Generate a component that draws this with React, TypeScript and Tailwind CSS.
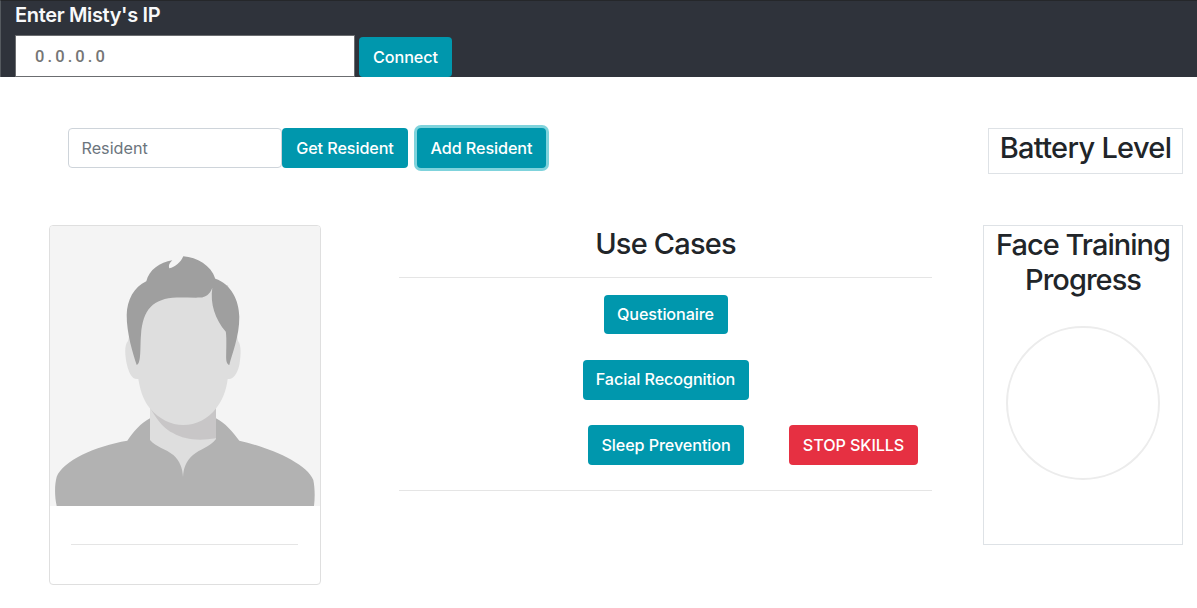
import type { ReactNode } from "react";

type ButtonProps = { className: string; children: ReactNode };

function Button({ className, children }: ButtonProps) {
  return (
    <button
      type="button"
      className={`flex shrink-0 items-center justify-center rounded-[4px] text-[16.2px] leading-6 font-[450] tracking-[-0.1px] whitespace-nowrap text-white ${className}`}
    >
      {children}
    </button>
  );
}

function Portrait() {
  return (
    <svg viewBox="50 226 270 280" className="block h-[280px] w-[270px]" aria-hidden="true">
      <rect x="50" y="226" width="270" height="280" fill="#f4f4f4" />
      {/* shirt */}
      <path
        d="M56.7 506C54.5 496 54.5 485 56.7 476.7C63 461 95 446 127.3 440.7C133 432 141 423 150 418.3H216C225 423 233 432 239.3 440.7C268 447 307 463 313.3 480C315 488 315 498 314 506Z"
        fill="#b2b2b2"
      />
      {/* neck */}
      <path
        d="M150 400H216V439C210 447 200 449 193 455C186 461 183.5 468 183 477C182.5 468 180 461 173.3 455C166 449 156 447 150 440Z"
        fill="#dedede"
      />
      <path d="M150 407.7C158 422 166 430 173 433C185 440 199 441 216 438.3V405Z" fill="#c8c6c7" />
      {/* ears and face */}
      <path
        d="M128 341C124 345 125 356 127 365C129 373 132 380 138.3 379C141 395 145 402 150 408.5C159 419 171 425 183.3 425C196 425 208 419 216 408.5C222 401 226 392 227.7 379C234 380 238 372 239.5 364C241 355 241.5 345 238 341L228 285H140Z"
        fill="#dedede"
      />
      {/* hair */}
      <path
        d="M136.7 365C133 354 126.5 333 126.7 315C127 300 134 287 146.3 281.3C149 270 160 262 172.3 260.3C169.5 263 168.3 265 169.2 268.2C175 267.5 181 262 183.3 256.3C197 257.5 211 265 215.3 278.8C231 284 239 300 239.3 316.7C239.5 336 232 354 229.3 365C226 364 226 359 226.2 353C226.5 345 226.5 336 225.8 331.7C215 319 210 304 212.3 287.7C210 294 206 297.3 200 297.6C192 297.8 184 297.3 176.7 297.5C153 298.5 143 309 141 335C140 345 141.5 364 136.7 365Z"
        fill="#9f9f9f"
      />
    </svg>
  );
}

export default function App() {
  return (
    <div className="h-[608px] w-[1197px] overflow-hidden bg-white font-['Inter','Liberation_Sans',sans-serif] text-[#212529]">
      <header className="h-[77px] border-t border-l border-t-[#25272a] border-l-[#555a5f] bg-[#2f333b] pl-[14px]">
        <h5 className="h-[34px] pt-[2px] text-[20px] leading-[25px] font-semibold tracking-[-0.35px] text-[#f8f9fa]">
          Enter Misty's IP
        </h5>
        <div className="flex">
          <input
            placeholder="0.0.0.0"
            className="h-[42px] w-[340px] border border-[#6b6d70] bg-white pt-px pl-[19px] font-['Roboto',sans-serif] text-[16.5px] font-medium tracking-[3.1px] placeholder:text-[#757575]"
          />
          <Button className="mt-0.5 ml-1 h-10 w-[93px] bg-[#0097ad]">Connect</Button>
        </div>
      </header>

      <main>
        <div className="flex items-start pt-[51px] pr-[14px] pl-[68px]">
          <input
            placeholder="Resident"
            className="h-10 w-[214px] rounded-[4px] border border-[#ced4da] bg-white px-[12.5px] text-[16.2px] placeholder:text-[#6c757d]"
          />
          <Button className="h-10 w-[126px] bg-[#0097ad]">Get Resident</Button>
          <Button className="ml-[9px] h-10 w-[129px] bg-[#0097ad] shadow-[0_0_0_3px_#7fd3dc]">
            Add Resident
          </Button>
          <h2 className="ml-auto h-[46px] w-[195px] border border-[#dee2e6] pt-px text-center text-[29px] leading-[35px] font-medium tracking-[-0.7px] whitespace-nowrap">
            Battery Level
          </h2>
        </div>

        <div className="flex items-start pt-[51px] pr-[14px] pl-[49px]">
          <section className="h-[360px] w-[272px] overflow-hidden rounded-[4px] border border-[#dfdfdf] bg-white">
            <Portrait />
            <hr className="mt-[38px] mr-[22px] ml-[21px] border-[#e5e5e5]" />
          </section>

          <section className="ml-[78px] w-[533px]">
            <h2 className="h-[52px] pt-px text-center text-[29px] leading-[35px] font-medium tracking-[-0.8px]">
              Use Cases
            </h2>
            <hr className="border-[#e5e5e5]" />
            <div className="flex flex-col items-center pt-[17px]">
              <Button className="h-[39px] w-[124px] bg-[#0097ad] pb-px">Questionaire</Button>
              <Button className="mt-[26px] h-10 w-[166px] bg-[#0097ad] pb-0.5">Facial Recognition</Button>
            </div>
            <div className="mt-[25px] mb-[25px] flex pl-[189px]">
              <Button className="h-10 w-[156px] bg-[#0097ad]">Sleep Prevention</Button>
              <Button className="ml-[45px] h-10 w-[129px] bg-[#e63042]">STOP SKILLS</Button>
            </div>
            <hr className="border-[#e5e5e5]" />
          </section>

          <section className="ml-auto flex h-[320px] w-[200px] flex-col items-center border border-[#dee2e6]">
            <h2 className="pt-px text-center text-[29px] leading-[35px] font-medium tracking-[-0.97px]">
              Face Training
              <br />
              Progress
            </h2>
            <div className="mt-[29px] h-[154px] w-[154px] rounded-full border-2 border-[#ececec]" />
          </section>
        </div>
      </main>
    </div>
  );
}
